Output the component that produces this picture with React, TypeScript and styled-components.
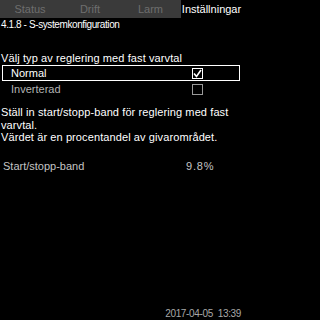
import React from "react";
import styled, { createGlobalStyle } from "styled-components";

const Global = createGlobalStyle`
  html, body { margin: 0; padding: 0; background: #000; }
  body { font-family: "Liberation Sans", Arial, sans-serif; }
`;

const Screen = styled.div`
  width: 242px;
  height: 320px;
  background: #000;
  color: #fff;
  display: flex;
  flex-direction: column;
  overflow: hidden;
`;

const TabBar = styled.div`
  display: grid;
  grid-template-columns: 60px 60px 61px 61px;
  height: 18px;
  background: #3a3a3a;
`;

const Tab = styled.div<{ $active?: boolean }>`
  display: flex;
  align-items: center;
  justify-content: center;
  font-size: 11px;
  line-height: 18px;
  padding-bottom: 1px;
  white-space: nowrap;
  color: ${(p) => (p.$active ? "#fff" : "#6e6e6e")};
  background: ${(p) => (p.$active ? "#000" : "transparent")};
`;

const Title = styled.div`
  margin-top: 1px;
  padding-left: 1px;
  font-size: 10px;
  line-height: 12px;
  letter-spacing: -0.4px;
  white-space: nowrap;
`;

const Heading = styled.div`
  margin-top: 21px;
  padding-left: 1px;
  font-size: 11px;
  line-height: 13px;
  letter-spacing: 0.1px;
  white-space: nowrap;
`;

const OptionList = styled.div`
  display: flex;
  flex-direction: column;
  margin: 0 2px;
`;

const OptionRow = styled.div<{ $selected?: boolean }>`
  display: flex;
  align-items: center;
  justify-content: space-between;
  height: 14px;
  padding: 0 36px 0 8px;
  border: 1px solid ${(p) => (p.$selected ? "#fff" : "transparent")};
  font-size: 11px;
  color: ${(p) => (p.$selected ? "#fff" : "#b4b4b4")};
`;

const Check = styled.div<{ $on?: boolean }>`
  width: 9px;
  height: 9px;
  border: 1px solid ${(p) => (p.$on ? "#fff" : "#9a9a9a")};
  display: flex;
  align-items: center;
  justify-content: center;
`;

const Paragraph = styled.div`
  margin-top: 9px;
  padding-left: 1px;
  font-size: 11px;
  line-height: 12.5px;
  letter-spacing: 0.1px;
  white-space: nowrap;
`;

const ValueRow = styled.div`
  margin-top: 16px;
  display: grid;
  grid-template-columns: 183px auto;
  padding-left: 3px;
  font-size: 11px;
  line-height: 13px;
  color: #c4c4c4;
`;

const Value = styled.span`
  letter-spacing: 0.8px;
`;

const Footer = styled.div`
  margin-top: auto;
  display: flex;
  justify-content: flex-end;
  padding-right: 1px;
  font-size: 10px;
  line-height: 12px;
  color: #a8a8a8;
  letter-spacing: -0.35px;
  white-space: pre;
`;

function CheckBox({ on }: { on?: boolean }) {
  return (
    <Check $on={on}>
      {on && (
        <svg width="9" height="9" viewBox="0 0 9 9">
          <path d="M1 4.5 L3.5 7.5 L8 1" fill="none" stroke="#fff" strokeWidth="1.6" />
        </svg>
      )}
    </Check>
  );
}

export default function App() {
  return (
    <>
      <Global />
      <Screen>
        <TabBar>
          <Tab>Status</Tab>
          <Tab>Drift</Tab>
          <Tab>Larm</Tab>
          <Tab $active>Inställningar</Tab>
        </TabBar>
        <Title>4.1.8 - S-systemkonfiguration</Title>
        <Heading>Välj typ av reglering med fast varvtal</Heading>
        <OptionList>
          <OptionRow $selected>
            <span>Normal</span>
            <CheckBox on />
          </OptionRow>
          <OptionRow>
            <span>Inverterad</span>
            <CheckBox />
          </OptionRow>
        </OptionList>
        <Paragraph>
          Ställ in start/stopp-band för reglering med fast
          <br />
          varvtal.
          <br />
          Värdet är en procentandel av givarområdet.
        </Paragraph>
        <ValueRow>
          <span>Start/stopp-band</span>
          <Value>9.8%</Value>
        </ValueRow>
        <Footer>{"2017-04-05  13:39"}</Footer>
      </Screen>
    </>
  );
}
